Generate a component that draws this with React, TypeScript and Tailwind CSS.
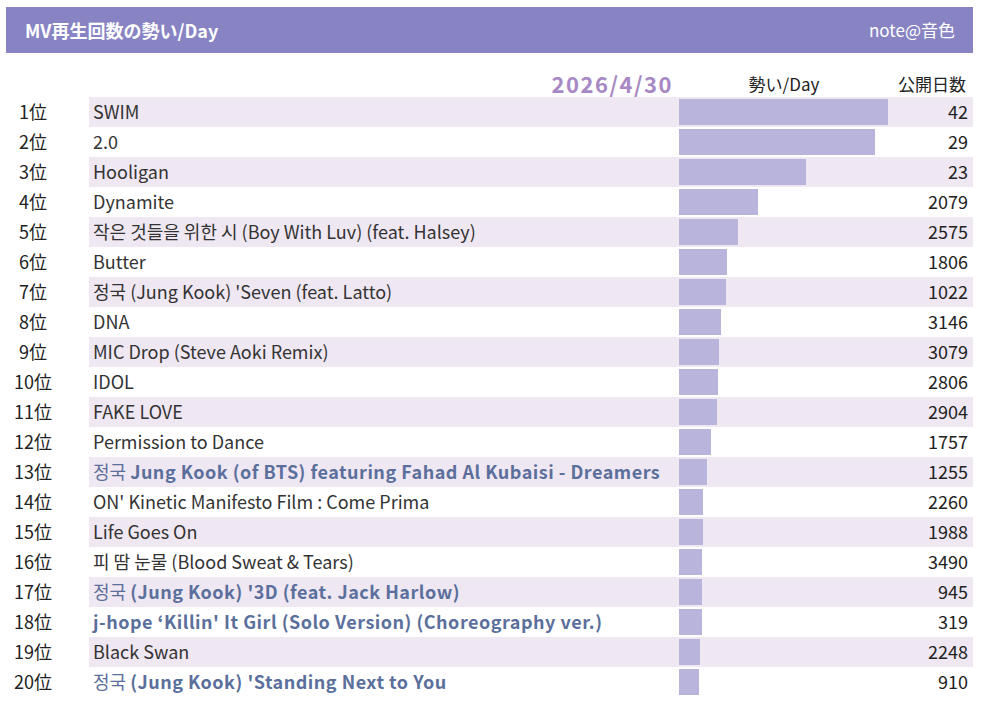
type Row = {
  title: string;
  ko?: string;
  bold?: boolean;
  bar: number;
  days: number;
};

const rows: Row[] = [
  { title: "SWIM", bar: 209, days: 42 },
  { title: "2.0", bar: 196, days: 29 },
  { title: "Hooligan", bar: 127, days: 23 },
  { title: "Dynamite", bar: 79, days: 2079 },
  { title: "작은 것들을 위한 시 (Boy With Luv) (feat. Halsey)", bar: 59, days: 2575 },
  { title: "Butter", bar: 48, days: 1806 },
  { title: "정국 (Jung Kook) 'Seven (feat. Latto)", bar: 47, days: 1022 },
  { title: "DNA", bar: 42, days: 3146 },
  { title: "MIC Drop (Steve Aoki Remix)", bar: 40, days: 3079 },
  { title: "IDOL", bar: 39, days: 2806 },
  { title: "FAKE LOVE", bar: 38, days: 2904 },
  { title: "Permission to Dance", bar: 32, days: 1757 },
  { ko: "정국 ", title: "Jung Kook (of BTS) featuring Fahad Al Kubaisi - Dreamers", bold: true, bar: 28, days: 1255 },
  { title: "ON' Kinetic Manifesto Film : Come Prima", bar: 24, days: 2260 },
  { title: "Life Goes On", bar: 24, days: 1988 },
  { title: "피 땀 눈물 (Blood Sweat & Tears)", bar: 23, days: 3490 },
  { ko: "정국 ", title: "(Jung Kook) '3D (feat. Jack Harlow)", bold: true, bar: 23, days: 945 },
  { title: "j-hope ‘Killin' It Girl (Solo Version) (Choreography ver.)", bold: true, bar: 23, days: 319 },
  { title: "Black Swan", bar: 21, days: 2248 },
  { ko: "정국 ", title: "(Jung Kook) 'Standing Next to You", bold: true, bar: 20, days: 910 },
];

const font = {
  fontFamily: '"Noto Sans CJK JP", "Noto Sans CJK KR", "Noto Sans", sans-serif',
};

export default function App() {
  return (
    <div className="w-[986px] h-[704px] bg-white px-[6px] pt-[7px] text-[#333]" style={font}>
      {/* タイトルバー */}
      <div className="w-[967px] h-[46px] bg-[#8884c4] flex items-center justify-between pl-[19px] pr-[18px] text-white">
        <span className="text-[18px] font-bold">MV再生回数の勢い/Day</span>
        <span className="text-[17px]">note@音色</span>
      </div>

      {/* 見出し行 */}
      <div className="flex items-end h-[44px] pb-[1px] w-[967px]">
        <div className="w-[83px]" />
        <div className="w-[590px] text-right pr-[6px] text-[22px] font-bold tracking-[1.5px] text-[#a888c4] leading-none pb-[2px]">
          2026/4/30
        </div>
        <div className="w-[210px] text-center text-[17px] leading-none pb-[4px] text-[#222]">勢い/Day</div>
        <div className="w-[84px] text-right pr-[7px] text-[17px] leading-none pb-[4px] text-[#222]">公開日数</div>
      </div>

      {/* ランキング */}
      <div className="w-[967px]">
        {rows.map((r, i) => (
          <div key={i} className="flex h-[30px] items-center">
            <div className="w-[83px] h-full flex items-center justify-center pr-[29px] pb-[1px] text-[18px] text-[#222] bg-white">
              {i + 1}位
            </div>
            <div
              className={
                i % 2 === 0
                  ? "flex-1 h-full flex items-center bg-[#efe7f2]"
                  : "flex-1 h-full flex items-center bg-white"
              }
            >
              <div
                className={
                  r.bold
                    ? "w-[590px] pl-[4px] pb-[1px] text-[18px] font-bold tracking-[0.5px] text-[#5b6f9c] whitespace-nowrap overflow-hidden"
                    : "w-[590px] pl-[4px] pb-[1px] text-[18px] text-[#333] whitespace-nowrap overflow-hidden"
                }
              >
                {r.ko && <span className="font-normal tracking-normal">{r.ko}</span>}
                {r.title}
              </div>
              <div className="w-[210px] h-full flex items-center">
                <div className="h-[26px] bg-[#b8b4dc]" style={{ width: r.bar }} />
              </div>
              <div className="w-[84px] text-right pr-[5px] pb-[1px] text-[18px] text-[#222]">{r.days}</div>
            </div>
          </div>
        ))}
      </div>
    </div>
  );
}
